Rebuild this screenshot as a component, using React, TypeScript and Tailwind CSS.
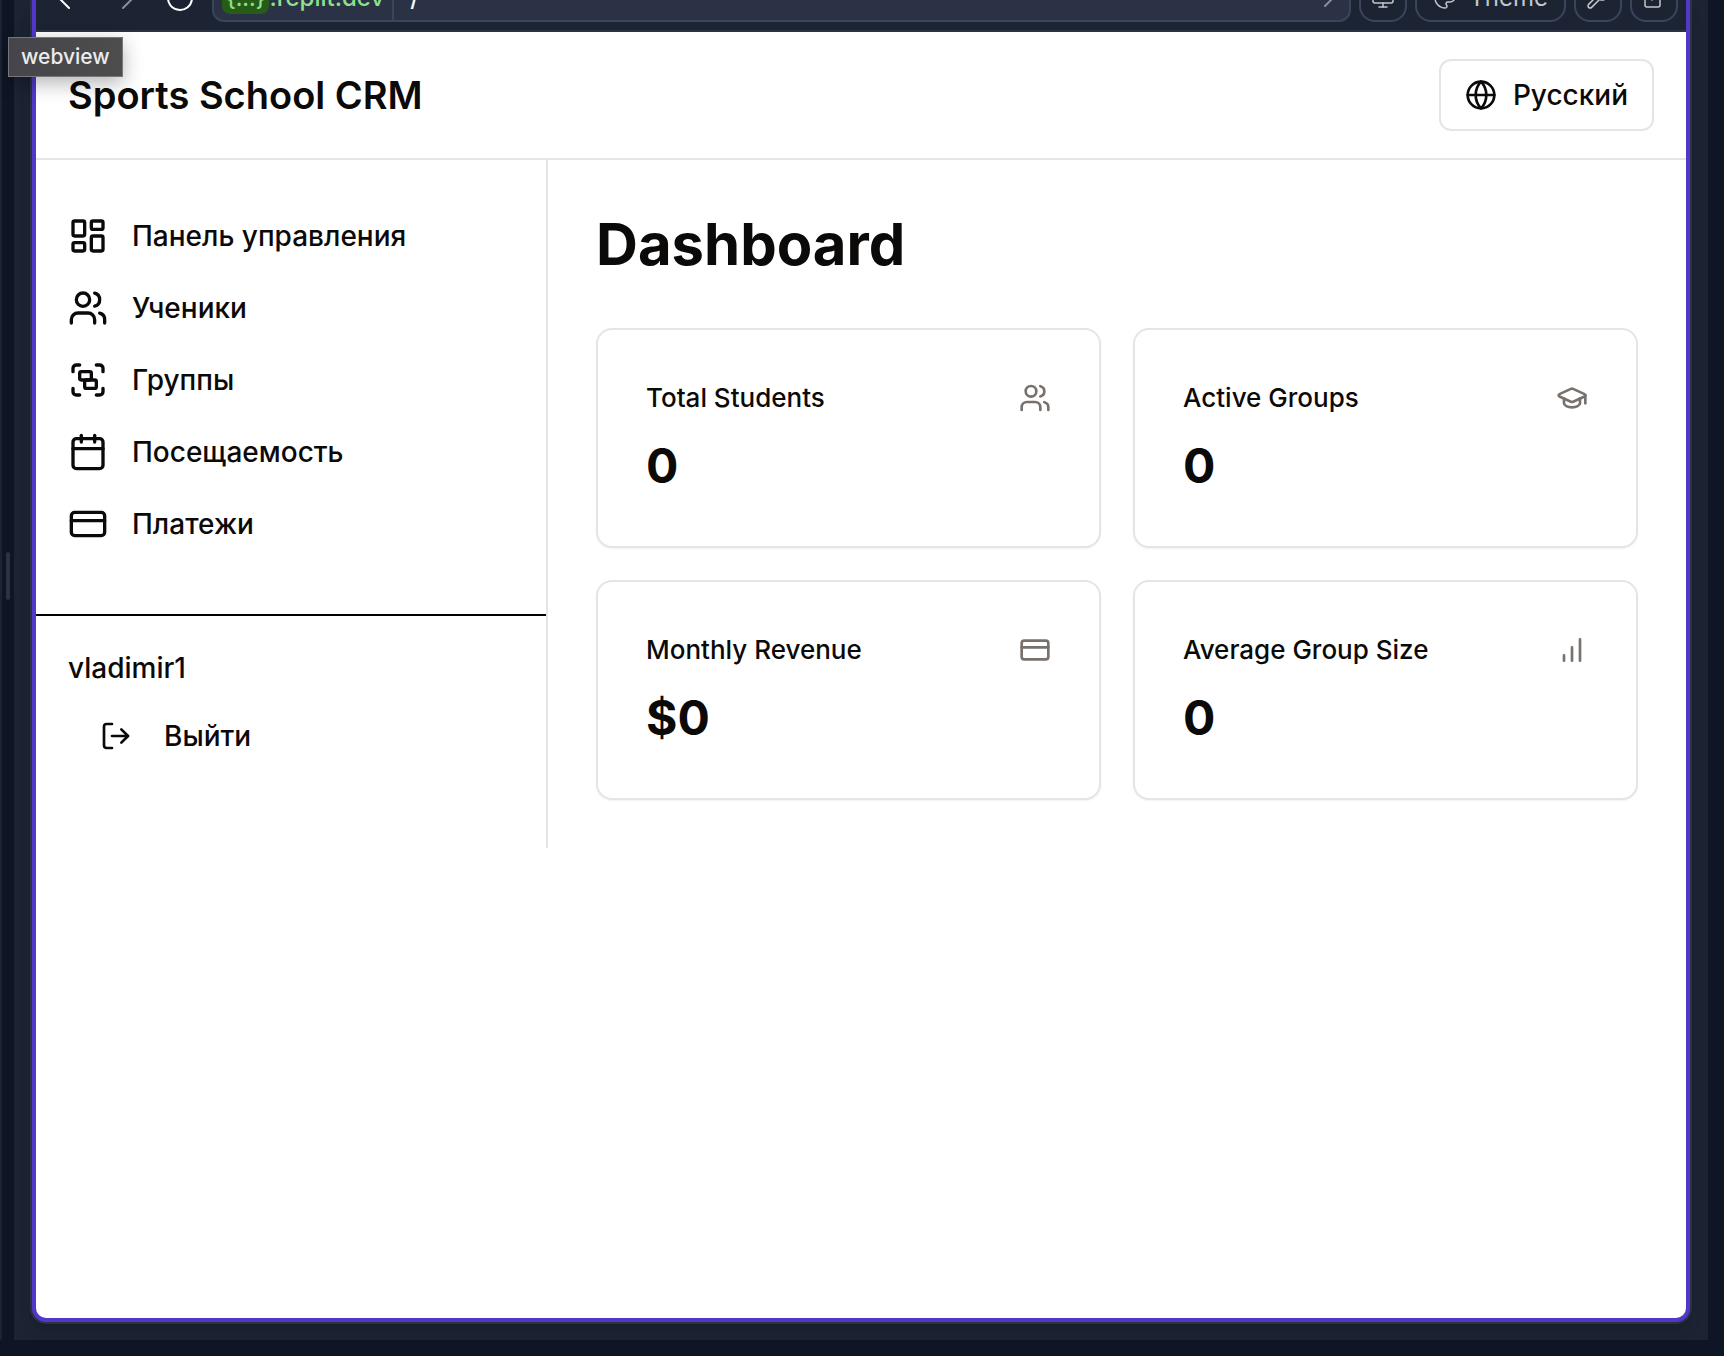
import type { ReactNode } from "react";
import {
  Calendar,
  ChevronRight,
  CreditCard,
  ExternalLink,
  Globe,
  GraduationCap,
  Group,
  LayoutDashboard,
  LogOut,
  Monitor,
  Palette,
  Users,
  Wrench,
} from "lucide-react";

const navItems = [
  { label: "Панель управления", icon: LayoutDashboard },
  { label: "Ученики", icon: Users },
  { label: "Группы", icon: Group },
  { label: "Посещаемость", icon: Calendar },
  { label: "Платежи", icon: CreditCard },
];

function BarsIcon() {
  return (
    <svg
      viewBox="0 0 24 24"
      className="size-8"
      fill="none"
      stroke="currentColor"
      strokeWidth="2"
      strokeLinecap="round"
      strokeLinejoin="round"
      aria-hidden="true"
    >
      <path d="M12 20V10M18 20V4M6 20v-4" />
    </svg>
  );
}

function ArrowIcon({ back = false }: { back?: boolean }) {
  return (
    <svg viewBox="0 0 32 32" className="size-8" fill="none" stroke="currentColor" strokeWidth="2" strokeLinecap="round" aria-hidden="true">
      <path d={back ? "M21 6L11 16L21 26" : "M11 6L21 16L11 26"} />
    </svg>
  );
}

function ReloadIcon() {
  return (
    <svg viewBox="0 0 32 32" className="size-8" fill="none" stroke="currentColor" strokeWidth="2" strokeLinecap="round" aria-hidden="true">
      <path d="M28 16A12 12 0 1 1 24 7L28 11V4" />
    </svg>
  );
}

function ToolButton({ label, children, wide = false }: { label: string; children: ReactNode; wide?: boolean }) {
  return (
    <button
      type="button"
      aria-label={label}
      className={
        "flex h-12 shrink-0 items-center justify-center gap-3 rounded-2xl border-2 border-[#3c445c] text-[24px] leading-8 text-[#c2c8cc] " +
        (wide ? "px-4" : "w-12")
      }
    >
      {children}
    </button>
  );
}

function StatCard({ title, value, icon }: { title: string; value: string; icon: ReactNode }) {
  return (
    <section className="rounded-2xl border-2 border-[#e5e5e5] bg-white p-12 shadow-xs">
      <div className="flex h-10 items-center justify-between">
        <h2 className="text-[26px] leading-10 font-medium">{title}</h2>
        <span className="text-[#78716c]">{icon}</span>
      </div>
      <p className="mt-4 text-5xl leading-[64px] font-bold">{value}</p>
    </section>
  );
}

function BrowserBar() {
  return (
    <div className="flex h-8 items-end gap-2 overflow-hidden border-b-2 border-[#2b3245] bg-[#1c2333] pr-2 pb-2 pl-3">
      <div className="flex h-12 w-[156px] shrink-0 items-center text-white">
        <button type="button" aria-label="Back"><ArrowIcon back /></button>
        <button type="button" aria-label="Forward" className="ml-8 text-[#8a8f98]"><ArrowIcon /></button>
        <button type="button" aria-label="Reload" className="ml-5"><ReloadIcon /></button>
      </div>
      <div className="flex h-12 flex-1 items-center rounded-xl border-2 border-[#3c445c] bg-[#2b3245] pr-1 text-[24px] leading-8 font-medium">
        <span className="ml-2 rounded-lg bg-[#265c18] px-1 text-[22px] text-[#8ee08c]">{"{...}"}</span>
        <span className="text-[#8ee08c]">.replit.dev</span>
        <span className="ml-2 h-full w-[2px] bg-[#3c445c]" />
        <span className="ml-4 flex-1 text-[#f5f9fc]">/</span>
        <ChevronRight className="size-8 text-[#8a8f98]" strokeWidth={1.5} />
      </div>
      <ToolButton label="Devices"><Monitor className="size-6" strokeWidth={1.5} /></ToolButton>
      <ToolButton label="Theme" wide><Palette className="size-6" strokeWidth={1.5} />Theme</ToolButton>
      <ToolButton label="Developer tools"><Wrench className="size-6" strokeWidth={1.5} /></ToolButton>
      <ToolButton label="Open in new tab"><ExternalLink className="size-6" strokeWidth={1.5} /></ToolButton>
    </div>
  );
}

export default function App() {
  return (
    <div className="relative flex min-h-screen bg-[#0e1525] font-['Inter',sans-serif] text-[#0c0a09]">
      <div className="mb-4 w-[2px] rounded-br-lg bg-[#1c2333]" />
      <div className="w-3 pl-1">
        <div className="mt-[552px] h-12 w-1 rounded-full bg-[#2b3245]" />
      </div>

      <div className="mr-4 mb-4 flex flex-1 bg-[#1c2333] px-4 pb-4">
        <div className="flex flex-1 rounded-b-2xl border-2 border-t-0 border-[#2b3245] bg-[#2b3245] shadow-lg">
          <div className="flex-1 overflow-hidden rounded-b-[14px] border-4 border-t-0 border-[#5138c8] bg-white">
            <BrowserBar />

            <header className="flex h-32 items-center justify-between border-b-2 border-[#e5e5e5] px-8">
              <h1 className="text-[38px] leading-[56px] font-semibold">Sports School CRM</h1>
              <button
                type="button"
                className="flex h-[72px] items-center gap-4 rounded-xl border-2 border-[#e5e5e5] px-6 text-[28px] leading-10 font-medium"
              >
                <Globe className="size-8" />
                Русский
              </button>
            </header>

            <div className="flex">
              <aside className="w-[512px] shrink-0 border-r-2 border-[#e5e5e5] pt-10">
                <nav className="px-8">
                  {navItems.map(({ label, icon: Icon }) => (
                    <a key={label} href="#" className="flex h-[72px] items-center gap-6 text-[28px] leading-10 font-medium">
                      <Icon className="size-10" />
                      {label}
                    </a>
                  ))}
                </nav>
                <div className="mt-[54px] border-t-2 border-black px-8 pt-8">
                  <p className="text-[28px] leading-10 font-medium">vladimir1</p>
                  <button type="button" className="mt-4 flex h-16 items-center gap-8 px-8 text-[28px] leading-10 font-medium">
                    <LogOut className="size-8" />
                    Выйти
                  </button>
                </div>
              </aside>

              <main className="flex-1 p-12">
                <h2 className="text-[58px] leading-[72px] font-bold">Dashboard</h2>
                <div className="mt-12 grid grid-cols-2 gap-8">
                  <StatCard title="Total Students" value="0" icon={<Users className="size-8" />} />
                  <StatCard title="Active Groups" value="0" icon={<GraduationCap className="size-8" />} />
                  <StatCard title="Monthly Revenue" value="$0" icon={<CreditCard className="size-8" />} />
                  <StatCard title="Average Group Size" value="0" icon={<BarsIcon />} />
                </div>
              </main>
            </div>
          </div>
        </div>
      </div>

      <div
        role="tooltip"
        className="absolute top-[37px] left-2 border border-[#77777a] bg-linear-to-r from-[#45454b] to-[#4d4d4d] px-3 py-1 text-[21px] leading-[30px] font-medium text-[#ececec] shadow-[0_6px_20px_rgba(0,0,0,0.3)]"
      >
        webview
      </div>
    </div>
  );
}
